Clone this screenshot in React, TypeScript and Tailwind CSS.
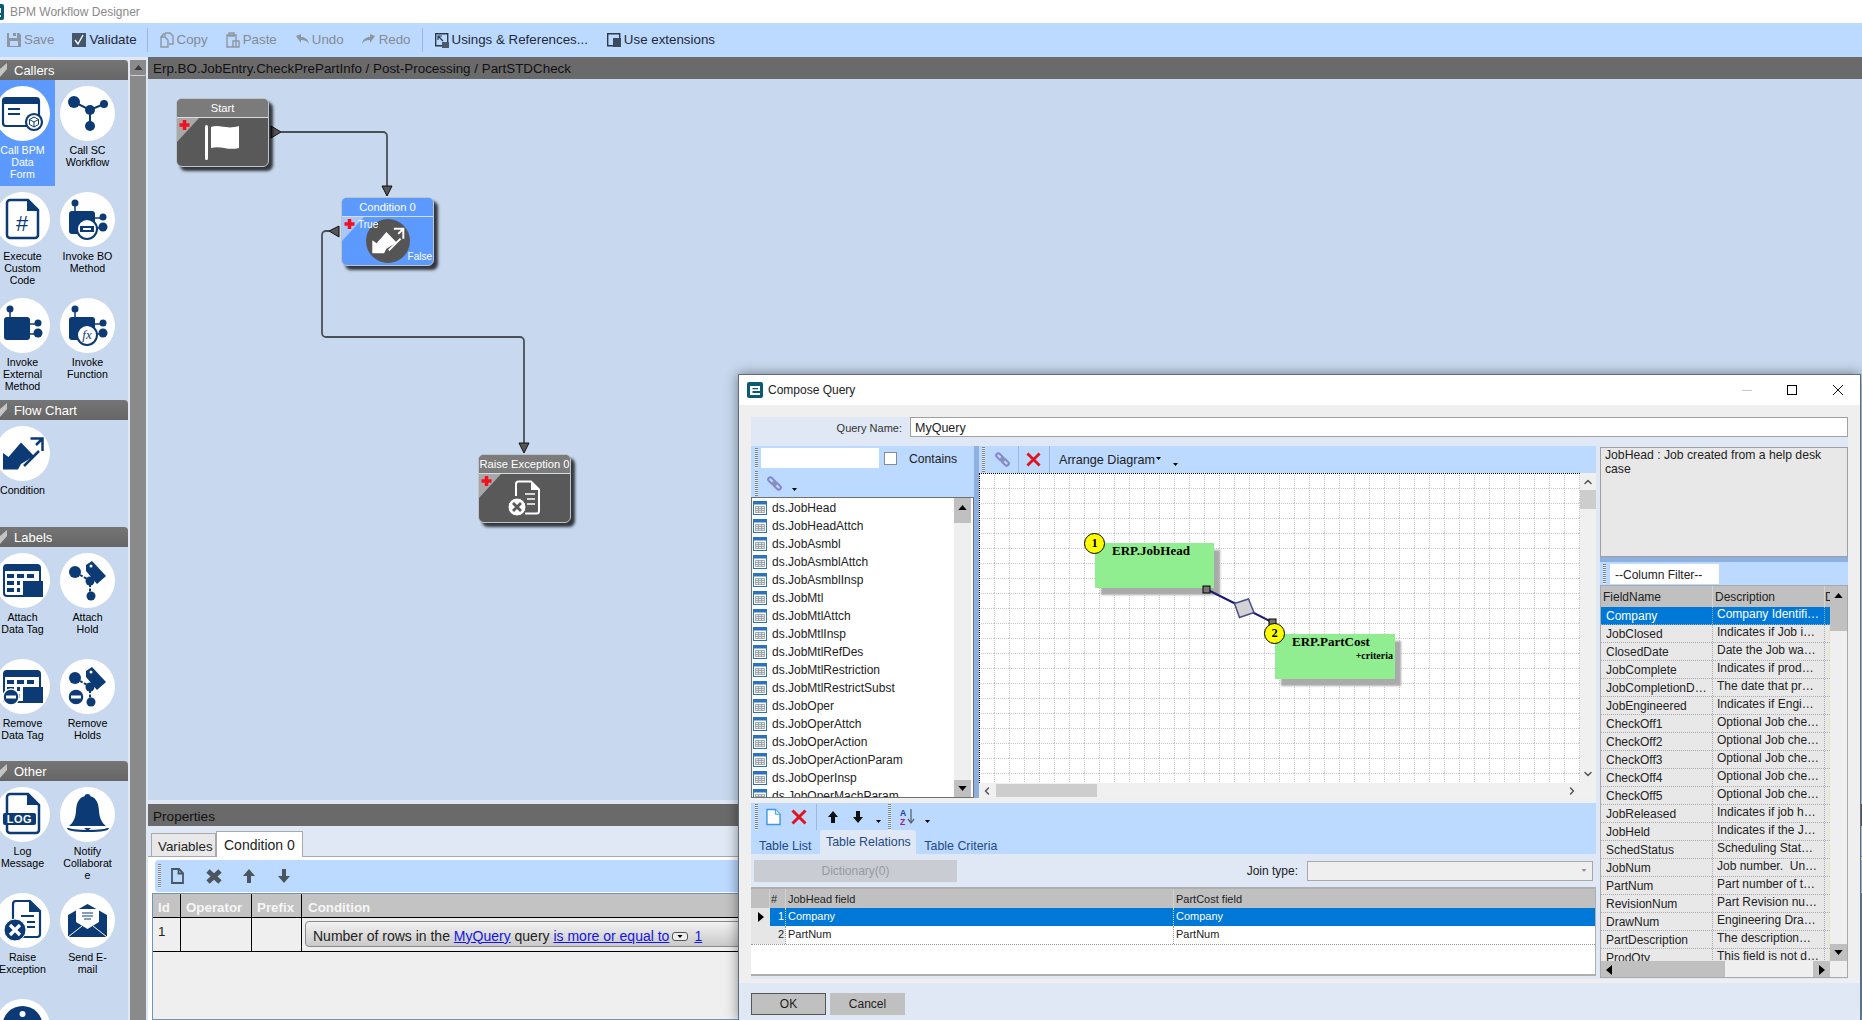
import type { ReactNode } from 'react';
import { ChevronDown, ChevronLeft, ChevronRight, ChevronUp } from 'lucide-react';

const NAVY = '#0b3a75';

// sidebar icons, all drawn on the 55x55 white circle
const BlockPins = ({ solid = true }: { solid?: boolean }) => (
  <g fill={NAVY} stroke={NAVY}>
    <circle cx="15" cy="11" r="3.5" stroke="none" />
    <path d="M15 12V20M33 26H42M33 36H42" strokeWidth="1.5" fill="none" />
    <rect x="9" y="19" width="26" height="23" rx="3" stroke="none" />
    <circle cx="43" cy="25" r="3.5" stroke="none" />
    <circle cx="43" cy="35" r="4.5" stroke="none" />
    {!solid && <circle cx="27" cy="37" r="10" fill="#fff" strokeWidth="2" />}
  </g>
);

const TableGlyph = () => (
  <g>
    <rect x="9" y="12" width="36" height="31" rx="3" fill="none" stroke={NAVY} strokeWidth="2" />
    <path d="M9 15a3 3 0 0 1 3-3h30a3 3 0 0 1 3 3v3H9z" fill={NAVY} />
    <path
      d="M12 21h7v4h-7zM22 21h7v4h-7zM32 21h7v4h-7zM12 28h7v4h-7zM22 28h3v4h-3zM12 35h7v4h-7zM22 35h3v4h-3z"
      fill={NAVY}
    />
    <rect x="28" y="28" width="20" height="16" fill={NAVY} />
  </g>
);

const HoldGlyph = () => (
  <g fill={NAVY}>
    <circle cx="15" cy="19" r="6" />
    <path d="M20 22l9 5M30 31v8" stroke={NAVY} strokeWidth="2" strokeDasharray="3 1.5" />
    <circle cx="30" cy="28" r="4.5" />
    <circle cx="31" cy="43" r="4.5" />
    <path d="M26 12l6-4 14 15-9 8-11-13z" />
    <circle cx="31" cy="13" r="1.5" fill="#fff" />
  </g>
);

const MinusBadge = () => (
  <g>
    <circle cx="16" cy="38" r="8" fill={NAVY} stroke="#fff" strokeWidth="1.5" />
    <rect x="11" y="36.5" width="10" height="3" fill="#fff" />
  </g>
);

const ConditionGlyph = ({ color = NAVY }: { color?: string }) => (
  <g>
    <path d="M8 43.500V27L13.500 31L26 16.500L39 30L26 38L23 43.500z" fill={color} />
    <path d="M35.500 12.500H47.500V25M47.500 12.500L41 19M44 25L29 40" fill="none" stroke={color} strokeWidth="2.500" />
  </g>
);

const icons: Record<string, ReactNode> = {
  form: (
    <g>
      <rect x="8" y="12" width="36" height="28" rx="3" fill="none" stroke={NAVY} strokeWidth="2.2" />
      <path d="M8 15a3 3 0 0 1 3-3h30a3 3 0 0 1 3 3v3H8z" fill={NAVY} />
      <path d="M13 23h12M13 28h12" stroke={NAVY} strokeWidth="2" />
      <circle cx="39" cy="36" r="8" fill="#fff" stroke={NAVY} strokeWidth="2.2" />
      <path d="M39 31l4.500 2.500v5L39 41l-4.500-2.500v-5zM34.500 33.500L39 36l4.500-2.500M39 36v5" fill="none" stroke={NAVY} strokeWidth="1" />
    </g>
  ),
  workflow: (
    <g fill={NAVY}>
      <path d="M14 16L30 24L44 18M30 24V40" stroke={NAVY} strokeWidth="2" fill="none" />
      <circle cx="14" cy="16" r="6" />
      <circle cx="30" cy="24" r="5" />
      <circle cx="44" cy="18" r="4" />
      <circle cx="30" cy="40" r="5" />
    </g>
  ),
  code: (
    <g>
      <path d="M15 8h18l10 10v25a3 3 0 0 1-3 3H15a3 3 0 0 1-3-3V11a3 3 0 0 1 3-3z" fill="none" stroke={NAVY} strokeWidth="2.500" />
      <path d="M32 8v11h11z" fill={NAVY} />
      <text x="27" y="39" textAnchor="middle" fontSize="22" fontFamily="Liberation Sans" fill={NAVY}>#</text>
    </g>
  ),
  bo: (
    <g>
      <BlockPins solid={false} />
      <rect x="20" y="34" width="14" height="6" fill={NAVY} />
      <rect x="23" y="36" width="8" height="2" fill="#fff" />
    </g>
  ),
  external: <BlockPins />,
  fx: (
    <g>
      <BlockPins solid={false} />
      <text x="27" y="41" textAnchor="middle" fontSize="13" fontStyle="italic" fontFamily="Liberation Serif" fill={NAVY}>fx</text>
    </g>
  ),
  condition: <ConditionGlyph />,
  attachTag: <TableGlyph />,
  attachHold: <HoldGlyph />,
  removeTag: (
    <g>
      <TableGlyph />
      <MinusBadge />
    </g>
  ),
  removeHold: (
    <g>
      <HoldGlyph />
      <MinusBadge />
    </g>
  ),
  log: (
    <g>
      <path d="M15 7h18l11 11v25a3 3 0 0 1-3 3H15a3 3 0 0 1-3-3V10a3 3 0 0 1 3-3z" fill="none" stroke={NAVY} strokeWidth="2.500" />
      <path d="M32 7v11h12z" fill={NAVY} />
      <rect x="8" y="26" width="33" height="12" rx="2" fill={NAVY} />
      <text x="24.500" y="36" textAnchor="middle" fontSize="11" fontWeight="700" fontFamily="Liberation Sans" letterSpacing="0.5" fill="#fff">LOG</text>
    </g>
  ),
  bell: (
    <g fill={NAVY}>
      <circle cx="27.500" cy="10" r="3" />
      <path d="M27.500 9c-8 0-11 6-11.500 15-.4 7-3 12-7 15h37c-4-3-6.600-8-7-15C38.500 15 35.500 9 27.500 9z" />
      <path d="M8 41c0 4 40 4 40 0" fill="none" stroke={NAVY} strokeWidth="2" />
      <path d="M24 41h7l-3.500 3z" />
    </g>
  ),
  raise: (
    <g>
      <path d="M20 8h15l10 10v23a3 3 0 0 1-3 3H22" fill="none" stroke={NAVY} strokeWidth="2.200" />
      <path d="M18 28V11a3 3 0 0 1 3-3" fill="none" stroke={NAVY} strokeWidth="2.200" />
      <path d="M34 8v11h11z" fill={NAVY} />
      <path d="M26 23h13M32 29h8M32 34h8" stroke={NAVY} strokeWidth="1.800" />
      <circle cx="20" cy="37" r="11" fill={NAVY} stroke="#fff" strokeWidth="1" />
      <path d="M15 32l10 10M25 32L15 42" stroke="#fff" strokeWidth="3.200" />
    </g>
  ),
  mail: (
    <g>
      <path d="M8 22L27.500 11 47 22v22H8z" fill={NAVY} />
      <path d="M16 16h23v13l-11.500 7L16 29z" fill="#fff" />
      <path d="M22 20h11M22 23h11M24 26h7" stroke={NAVY} strokeWidth="1.200" />
      <path d="M8 44l14-11M47 44L33 33" stroke="#fff" strokeWidth="1" />
    </g>
  ),
  info: (
    <g>
      <circle cx="27.500" cy="27" r="20" fill={NAVY} />
      <circle cx="27.500" cy="15" r="3" fill="#fff" />
      <rect x="25" y="21" width="5" height="16" fill="#fff" />
    </g>
  ),
};

const sections = [
  {
    title: 'Callers',
    gap: '',
    items: [
      { icon: 'form', label: 'Call BPM\nData\nForm', selected: true },
      { icon: 'workflow', label: 'Call SC\nWorkflow' },
      { icon: 'code', label: 'Execute\nCustom\nCode' },
      { icon: 'bo', label: 'Invoke BO\nMethod' },
      { icon: 'external', label: 'Invoke\nExternal\nMethod' },
      { icon: 'fx', label: 'Invoke\nFunction' },
    ],
  },
  { title: 'Flow Chart', gap: 'mt-[2px]', items: [{ icon: 'condition', label: 'Condition' }] },
  {
    title: 'Labels',
    gap: 'mt-px',
    items: [
      { icon: 'attachTag', label: 'Attach\nData Tag' },
      { icon: 'attachHold', label: 'Attach\nHold' },
      { icon: 'removeTag', label: 'Remove\nData Tag' },
      { icon: 'removeHold', label: 'Remove\nHolds' },
    ],
  },
  {
    title: 'Other',
    gap: 'mt-[2px]',
    items: [
      { icon: 'log', label: 'Log\nMessage' },
      { icon: 'bell', label: 'Notify\nCollaborat\ne' },
      { icon: 'raise', label: 'Raise\nException' },
      { icon: 'mail', label: 'Send E-\nmail' },
      { icon: 'info', label: '' },
    ],
  },
];

const tableNames = [
  'JobHead', 'JobHeadAttch', 'JobAsmbl', 'JobAsmblAttch', 'JobAsmblInsp', 'JobMtl', 'JobMtlAttch', 'JobMtlInsp',
  'JobMtlRefDes', 'JobMtlRestriction', 'JobMtlRestrictSubst', 'JobOper', 'JobOperAttch', 'JobOperAction',
  'JobOperActionParam', 'JobOperInsp', 'JobOperMachParam',
];

const fields = [
  ['Company', 'Company Identifi…'],
  ['JobClosed', 'Indicates if Job i…'],
  ['ClosedDate', 'Date the Job wa…'],
  ['JobComplete', 'Indicates if prod…'],
  ['JobCompletionD…', 'The date that pr…'],
  ['JobEngineered', 'Indicates if Engi…'],
  ['CheckOff1', 'Optional Job che…'],
  ['CheckOff2', 'Optional Job che…'],
  ['CheckOff3', 'Optional Job che…'],
  ['CheckOff4', 'Optional Job che…'],
  ['CheckOff5', 'Optional Job che…'],
  ['JobReleased', 'Indicates if job h…'],
  ['JobHeld', 'Indicates if the J…'],
  ['SchedStatus', 'Scheduling Stat…'],
  ['JobNum', 'Job number.  Un…'],
  ['PartNum', 'Part number of t…'],
  ['RevisionNum', 'Part Revision nu…'],
  ['DrawNum', 'Engineering Dra…'],
  ['PartDescription', 'The description…'],
  ['ProdQty', 'This field is not d…'],
];

const Tri = ({ dir, className = '' }: { dir: 'up' | 'down' | 'left' | 'right'; className?: string }) => {
  const points = { up: '0,6 5,0 10,6', down: '0,0 10,0 5,6', left: '6,0 6,10 0,5', right: '0,0 0,10 6,5' }[dir];
  const box = dir === 'up' || dir === 'down' ? '0 0 10 6' : '0 0 6 10';
  return (
    <svg viewBox={box} className={className} fill="currentColor">
      <polygon points={points} />
    </svg>
  );
};

const Grip = ({ className = '' }: { className?: string }) => (
  <div className={`w-[3px] shrink-0 bg-[repeating-linear-gradient(to_bottom,#77818e_0_1px,#e8f0fb_1px_2px)] ${className}`} />
);

const AppIcon = ({ className = '' }: { className?: string }) => (
  <svg viewBox="0 0 16 16" className={className}>
    <rect width="16" height="16" rx="2" fill="#0b5a73" />
    <path d="M3 4h10v5H5.500v2H13v2H3zM5.500 6v1.200H11V6z" fill="#fff" fillRule="evenodd" />
  </svg>
);

const LinkIcon = ({ className = '' }: { className?: string }) => (
  <svg viewBox="0 0 16 16" className={className} fill="none">
    <rect x="0.800" y="2.800" width="8.500" height="4.500" rx="2.200" transform="rotate(45 5 5)" stroke="#8388cc" strokeWidth="2.200" />
    <rect x="6.700" y="8.700" width="8.500" height="4.500" rx="2.200" transform="rotate(45 11 11)" stroke="#8388cc" strokeWidth="2.200" />
    <path d="M6 6l4 4" stroke="#8f96a0" strokeWidth="2.500" />
  </svg>
);

const RedX = ({ className = '' }: { className?: string }) => (
  <svg viewBox="0 0 16 16" className={className}>
    <path d="M1.500 1.500L14.500 14.500M14.500 1.500L1.500 14.500" stroke="#e0141e" strokeWidth="3" />
  </svg>
);

const TableIcon = () => (
  <svg viewBox="0 0 14 14" className="h-[14px] w-[14px] shrink-0">
    <rect x="0.500" y="0.500" width="13" height="13" fill="#fff" stroke="#2b73bd" />
    <rect x="0.500" y="0.500" width="13" height="3" fill="#2b73bd" />
    <path d="M2.500 5.500h9v6h-9zM2.500 7.500h9M2.500 9.500h9M5.500 5.500v6M8.500 5.500v6" fill="#e4e4e4" stroke="#909aa5" strokeWidth="0.800" />
  </svg>
);

const TinyArrow = ({ className = '' }: { className?: string }) => (
  <Tri dir="down" className={`h-[3px] w-[5px] text-black ${className}`} />
);

const ToolItem = ({ icon, label, muted }: { icon: ReactNode; label: string; muted?: boolean }) => (
  <div className={`flex items-center gap-[3px] ${muted ? 'text-[#858b93]' : 'text-[#1f2937]'}`}>
    <svg viewBox="0 0 14 16" className="h-4 w-[14px]">
      {icon}
    </svg>
    <span>{label}</span>
  </div>
);

function TopToolbar() {
  return (
    <div className="flex h-[34px] items-center bg-[#bcd9ff] pl-[7px] text-[13.33px]">
      <div className="flex gap-[18px]">
        <ToolItem muted label="Save" icon={<path d="M0 1h2v5h8V1h2l2 2v12H0zM3 9v5h8V9z M6 1h3v3H6z" fill="#8e96a1" />} />
        <ToolItem
          label="Validate"
          icon={
            <g>
              <rect y="1" width="14" height="14" fill="#46566a" />
              <path d="M3 8l3 4 5-9" fill="none" stroke="#fff" strokeWidth="1.300" />
            </g>
          }
        />
      </div>
      <div className="ml-[10px] mr-[12px] h-[24px] w-px bg-[#9fb6d4]" />
      <div className="flex gap-[18px]">
        <ToolItem muted label="Copy" icon={<path d="M5 1h5l3 3v8H9M5 1v3M1 5h4l3 3v7H1zM4 1.500L1 5" fill="none" stroke="#8e96a1" strokeWidth="1.400" />} />
        <ToolItem muted label="Paste" icon={<path d="M1 3h9v12H1zM3 1h5v3H3zM7 9h6v6H7z" fill="#bcd9ff" stroke="#8e96a1" strokeWidth="1.400" />} />
        <ToolItem muted label="Undo" icon={<path d="M1 4l5-2v3c4 0 7 2 8 7-2-3-4-4-8-4v3z" fill="#8e96a1" />} />
        <ToolItem muted label="Redo" icon={<path d="M13 4L8 2v3c-4 0-7 2-8 7 2-3 4-4 8-4v3z" fill="#8e96a1" />} />
      </div>
      <div className="ml-[11px] mr-[12px] h-[24px] w-px bg-[#9fb6d4]" />
      <div className="flex gap-[19px]">
        <ToolItem
          label="Usings & References..."
          icon={
            <g>
              <path d="M.7 1.700h12v12h-12z" fill="none" stroke="#2c3a48" strokeWidth="1.400" />
              <path d="M7 10h7v6H7z" fill="#4a5a6a" />
              <path d="M3 4l5 5M3 8V4h4" fill="none" stroke="#2c3a48" strokeWidth="1.200" />
            </g>
          }
        />
        <ToolItem
          label="Use extensions"
          icon={
            <g>
              <path d="M.7 1.700h12v12h-12z" fill="none" stroke="#2c3a48" strokeWidth="1.400" />
              <path d="M6 6h8v9H6z" fill="#3a4a5a" />
            </g>
          }
        />
      </div>
    </div>
  );
}

function Sidebar() {
  return (
    <div className="flex w-[148px] shrink-0 bg-[#dfe8f4] pt-[3px]">
      <div className="w-[128px] overflow-hidden bg-[#c8d9ef]">
        {sections.map((section) => (
          <div key={section.title} className={section.gap}>
            <div className="flex h-[20px] items-center rounded-tr-[4px] bg-[linear-gradient(#757575,#666)] pl-[14px] pt-[2px] text-[13px] text-white">
              <svg viewBox="0 0 8 14" className="absolute left-0 -mt-[2px] h-[14px] w-[8px]">
                <path d="M0 14V6L7 0v6z" fill="#c4c4c4" />
              </svg>
              {section.title}
            </div>
            <div className="-ml-[10px] grid w-[130px] grid-cols-[65px_65px]">
              {section.items.map((item) => (
                <div
                  key={item.icon}
                  className={`flex h-[106px] flex-col items-center pt-[6px] ${item.selected ? 'bg-[#5c9aff] text-white' : 'text-black'}`}
                >
                  <svg viewBox="0 0 55 55" className="h-[55px] w-[55px] shrink-0">
                    <circle cx="27.500" cy="27.500" r="27.500" fill="#fff" />
                    {icons[item.icon]}
                  </svg>
                  <div className="mt-[3px] whitespace-pre-line text-center text-[10.67px] leading-[12px]">{item.label}</div>
                </div>
              ))}
            </div>
          </div>
        ))}
      </div>
      <div className="ml-[2px] flex w-[16px] flex-col bg-[#8a8a8a]">
        <div className="flex h-[16px] items-center justify-center rounded-[2px] border-b border-[#ccd2da]">
          <Tri dir="up" className="h-[5px] w-[9px] text-[#3a3a3a]" />
        </div>
      </div>
    </div>
  );
}

const CornerPlus = ({ fill }: { fill: string }) => (
  <svg viewBox="0 0 22 24" className="absolute left-0 top-0 h-[24px] w-[22px]">
    <polygon points="0,0 22,0 0,24" fill={fill} />
    <path d="M7.500 2v10M2.500 7h10" stroke="#f01020" strokeWidth="3.500" />
  </svg>
);

const FlowNode = ({
  title,
  className,
  body,
  header,
  corner,
  children,
}: {
  title: string;
  className: string;
  body: string;
  header: string;
  corner: string;
  children: ReactNode;
}) => (
  <div className={`absolute flex h-[69px] w-[93px] flex-col rounded-[6px] border border-[#bfc4ca] shadow-[4px_4px_3px_rgba(0,0,0,0.75)] ${body} ${className}`}>
    <div className={`h-[19px] shrink-0 rounded-t-[5px] border-b border-[#d8dde3] text-center text-[11.2px] leading-[18px] text-white ${header}`}>{title}</div>
    <div className="relative flex-1">
      <CornerPlus fill={corner} />
      {children}
    </div>
  </div>
);

function Canvas() {
  return (
    <div className="relative h-[721px] bg-[#c8d9ef]">
      <svg viewBox="148 79 1714 721" className="absolute inset-0 h-[721px] w-[1714px]" fill="none">
        <path d="M281 132H383a4 4 0 0 1 4 4V187" stroke="#4a5058" strokeWidth="1.800" />
        <path d="M329 231H326a4 4 0 0 0-4 4V333a4 4 0 0 0 4 4H520a4 4 0 0 1 4 4V444" stroke="#4a5058" strokeWidth="1.800" />
        <polygon points="271,126 271,138 281,132" fill="#555" stroke="#111" />
        <polygon points="382,186 392,186 387,196" fill="#555" stroke="#111" />
        <polygon points="339,226 339,237 329,231" fill="#555" stroke="#111" />
        <polygon points="519,443 529,443 524,453" fill="#555" stroke="#111" />
      </svg>
      <FlowNode title="Start" className="left-[28px] top-[19px]" body="bg-[#595959]" header="bg-[#7b7b7b]" corner="#a8a8a8">
        <svg viewBox="0 0 91 49" className="absolute inset-0">
          <rect x="28" y="7" width="3" height="35" rx="1.500" fill="#fff" />
          <path d="M34 9c9-3 15 3 28-1v22c-12 3-18-3-28 0z" fill="#fff" />
        </svg>
      </FlowNode>
      <FlowNode title="Condition 0" className="left-[193px] top-[118px]" body="bg-[#5c9aff]" header="bg-[#5c9aff]" corner="#a9c7f7">
        <div className="absolute left-[24px] top-[2px] h-[44px] w-[44px] rounded-full bg-[#555]">
          <svg viewBox="0 0 56 56" className="h-[44px] w-[44px]">
            <ConditionGlyph color="#fff" />
          </svg>
        </div>
        <span className="absolute left-[16px] top-[2px] text-[10px] leading-[12px] text-white">True</span>
        <span className="absolute bottom-[2px] right-[1px] text-[10px] leading-[12px] text-white">False</span>
      </FlowNode>
      <FlowNode title="Raise Exception 0" className="left-[330px] top-[375px]" body="bg-[#595959]" header="bg-[#7b7b7b]" corner="#a8a8a8">
        <svg viewBox="0 0 91 49" className="absolute inset-0">
          <path d="M37 22V10a2.500 2.500 0 0 1 2.500-2.500H52l8 8V37a2.500 2.500 0 0 1-2.500 2.500H46" fill="none" stroke="#fff" strokeWidth="2" />
          <path d="M52 8v8h8z" fill="#fff" />
          <path d="M46 20h10M48 25h8M48 30h8" stroke="#fff" strokeWidth="1.500" />
          <circle cx="38" cy="33" r="9" fill="#fff" stroke="#595959" />
          <path d="M34 29l8 8M42 29l-8 8" stroke="#595959" strokeWidth="2.800" />
        </svg>
      </FlowNode>
    </div>
  );
}

function PropertiesPanel() {
  return (
    <div className="flex flex-1 flex-col overflow-hidden">
      <div className="h-[22px] shrink-0 bg-[#6a6a6a] pl-[5px] text-[13.6px] leading-[25px] text-[#111]">Properties</div>
      <div className="flex h-[31px] shrink-0 items-end border-b border-[#a9a9a9] bg-[#dfe8f4] pl-[3px] text-[#222]">
        <div className="h-[23px] w-[65px] border border-b-0 border-[#a9a9a9] bg-[#e8e8e8] pl-[6px] text-[13.33px] leading-[25px]">Variables</div>
        <div className="-mb-px h-[26px] w-[87px] border border-b-0 border-[#a9a9a9] bg-white pl-[7px] text-[14px] leading-[27px]">Condition 0</div>
      </div>
      <div className="flex flex-1 flex-col bg-white pl-[4px]">
        <div className="ml-[3px] mt-[3px] flex h-[32px] items-center rounded-l-[4px] bg-[#bcd9ff] pl-[3px]">
          <Grip className="h-[24px]" />
          <svg viewBox="0 0 135 16" className="ml-[10px] h-4 w-[135px]" fill="#4a5560">
            <path d="M1 1h7l4 4v10H1z M7.500 1v4.500H12" fill="none" stroke="#4a5560" strokeWidth="1.800" />
            <path d="M37 3L49 14M49 3L37 14" stroke="#4a5560" strokeWidth="4.800" fill="none" />
            <path d="M78 1l6 7h-4v7h-4V8h-4zM113 15l6-7h-4V1h-4v7h-4z" />
          </svg>
        </div>
        <div className="mt-px flex-1 border border-[#6f93bd] bg-[#efefef]">
          <div className="flex h-[24px] border-b border-black bg-[#c3c3c3] text-[13.33px] font-bold leading-[27px] text-[#f6f6f6]">
            <div className="w-[28px] border-r border-black pl-[5px]">Id</div>
            <div className="w-[71px] border-r border-black pl-[5px]">Operator</div>
            <div className="w-[50px] border-r border-black pl-[5px]">Prefix</div>
            <div className="pl-[6px]">Condition</div>
          </div>
          <div className="flex h-[34px] border-b border-black text-[13.33px] text-[#222]">
            <div className="w-[28px] border-r border-black pl-[5px] pt-[4px]">1</div>
            <div className="w-[71px] border-r border-black" />
            <div className="w-[50px] border-r border-black" />
            <div className="ml-[3px] mt-[3px] flex h-[26px] w-[600px] items-center rounded-l-[4px] border border-[#8a8a8a] bg-[linear-gradient(#f2f2f2,#c9c9c9)] pl-[7px] pt-[4px] text-[14px] text-[#222]">
              <span>Number of rows in the&nbsp;</span>
              <span className="text-[#1414e6] underline">MyQuery</span>
              <span>&nbsp;query&nbsp;</span>
              <span className="text-[#1414e6] underline">is more or equal to</span>
              <span className="ml-[3px] mt-px flex h-[9px] w-[16px] items-center justify-center rounded-[3px] border border-[#555] bg-[#eee]">
                <Tri dir="down" className="h-[3px] w-[6px] text-black" />
              </span>
              <span className="ml-[6px] text-[#1414e6] underline">1</span>
            </div>
          </div>
        </div>
      </div>
    </div>
  );
}

const VScroll = ({ top, bottom, thumb }: { top: string; bottom: string; thumb?: string }) => (
  <div className="flex w-[17px] shrink-0 flex-col justify-between bg-[#efefef]">
    <div className={`flex justify-center bg-[#c0c0c0] pt-[7px] ${top}`}>
      <Tri dir="up" className="h-[5px] w-[9px] text-black" />
    </div>
    {thumb}
    <div className={`flex items-center justify-center bg-[#c0c0c0] ${bottom}`}>
      <Tri dir="down" className="h-[5px] w-[9px] text-black" />
    </div>
  </div>
);

function TablePicker() {
  return (
    <div className="flex w-[223px] shrink-0 flex-col">
      <div className="h-[51px] shrink-0 bg-[#bcd9ff]">
        <div className="flex h-[24px] items-center pl-[4px]">
          <Grip className="h-[20px]" />
          <div className="ml-[3px] h-[20px] w-[118px] bg-white" />
          <div className="ml-[5px] h-[13px] w-[13px] border border-[#8a8a8a] bg-white" />
          <span className="ml-[12px] pt-[2px] text-[12.2px] text-[#222]">Contains</span>
        </div>
        <div className="flex h-[27px] items-center pl-[4px]">
          <Grip className="h-[25px]" />
          <LinkIcon className="ml-[9px] h-[15px] w-[15px]" />
          <TinyArrow className="ml-[10px] mt-[11px]" />
        </div>
      </div>
      <div className="flex h-[301px] border border-[#707070] bg-white">
        <div className="flex-1 overflow-hidden pt-px">
          {tableNames.map((name) => (
            <div key={name} className="flex h-[18px] items-center gap-[5px] pl-[1px] text-[12px] text-[#222]">
              <TableIcon />
              <span>ds.{name}</span>
            </div>
          ))}
        </div>
        <VScroll top="h-[25px]" bottom="h-[17px]" />
        <div className="w-[2px]" />
      </div>
    </div>
  );
}

function DiagramPane() {
  return (
    <div className="flex flex-1 flex-col">
      <div className="flex h-[27px] shrink-0 items-center bg-[#bcd9ff] pl-[3px]">
        <Grip className="h-[25px]" />
        <LinkIcon className="ml-[10px] h-[15px] w-[15px]" />
        <div className="ml-[8px] h-[27px] w-px bg-[#9fb6d4]" />
        <RedX className="ml-[7px] h-[15px] w-[15px]" />
        <div className="ml-[8px] h-[27px] w-px bg-[#9fb6d4]" />
        <span className="ml-[9px] pt-[2px] text-[12.6px] text-[#222]">Arrange Diagram</span>
        <TinyArrow className="ml-[1px] mb-[3px]" />
        <TinyArrow className="ml-[12px] mt-[9px]" />
      </div>
      <div className="flex h-[310px]">
        <div className="relative flex-1 overflow-hidden border-l border-t border-dotted border-black bg-white">
          <svg className="absolute inset-0 h-full w-full">
            <defs>
              <pattern id="diagram-grid" x="14" y="14" width="15" height="15" patternUnits="userSpaceOnUse">
                <path d="M0 .5H15M.5 0V15" stroke="#c8c8c8" strokeWidth="1" strokeDasharray="1 1" fill="none" />
              </pattern>
            </defs>
            <rect width="100%" height="100%" fill="url(#diagram-grid)" />
          </svg>

          <div className="absolute left-[115px] top-[69px] h-[45px] w-[119px] bg-[#90ee90] pl-[17px] pt-[1px] font-['Liberation_Serif',serif] text-[13px] font-bold leading-[14px] text-black shadow-[6px_7px_2px_#aaa]">
            ERP.JobHead
          </div>
          <div className="absolute left-[295px] top-[160px] h-[45px] w-[120px] bg-[#90ee90] pl-[17px] pt-[1px] font-['Liberation_Serif',serif] text-[13px] font-bold leading-[14px] text-black shadow-[6px_7px_2px_#aaa]">
            ERP.PartCost
            <div className="mt-[1px] pr-[2px] text-right text-[10px] leading-[12px]">+criteria</div>
          </div>
          <svg viewBox="0 0 600 310" className="absolute left-0 top-0 h-[310px] w-[600px]">
            <path d="M226 115L264 134L292 148" stroke="#1b1b72" strokeWidth="2" fill="none" />
            <polygon points="268.500,125 274,138.500 259.500,143.500 254.500,129.500" fill="#d3d3d3" stroke="#4a4f8a" strokeWidth="1.500" />
            <rect x="223" y="112" width="7" height="7" fill="#777" stroke="#000" />
            <rect x="289" y="145" width="7" height="7" fill="#777" stroke="#000" />
          </svg>
          <div className="absolute left-[104px] top-[59px] flex h-[21px] w-[21px] items-center justify-center rounded-full border border-black bg-[#ffff00] font-['Liberation_Serif',serif] text-[12.5px] font-bold">
            1
          </div>
          <div className="absolute left-[284px] top-[149px] flex h-[21px] w-[21px] items-center justify-center rounded-full border border-black bg-[#ffff00] font-['Liberation_Serif',serif] text-[12.5px] font-bold">
            2
          </div>
        </div>
        <div className="flex w-[16px] shrink-0 flex-col items-center justify-between bg-[#f0f0f0] py-[3px]">
          <div className="w-full">
            <ChevronUp size={12} strokeWidth={3} className="mx-auto text-[#555]" />
            <div className="mt-[2px] h-[19px] w-full bg-[#cdcdcd]" />
          </div>
          <ChevronDown size={12} strokeWidth={3} className="text-[#555]" />
        </div>
      </div>
      <div className="flex h-[15px] items-center justify-between bg-[#f0f0f0] pl-[2px] pr-[18px]">
        <div className="flex items-center">
          <ChevronLeft size={12} strokeWidth={3} className="text-[#555]" />
          <div className="ml-[3px] h-[13px] w-[101px] bg-[#cdcdcd]" />
        </div>
        <ChevronRight size={12} strokeWidth={3} className="text-[#555]" />
      </div>
    </div>
  );
}

function RelationsPane() {
  return (
    <div>
      <div className="h-[51px] bg-[#bcd9ff]">
        <div className="flex h-[27px] items-center pl-[4px]">
          <Grip className="h-[26px]" />
          <svg viewBox="0 0 16 18" className="ml-[8px] h-[18px] w-[15px]">
            <path d="M1 1h9l5 5v11H1z" fill="#fff" stroke="#3b97e6" strokeWidth="1.500" />
            <path d="M10 1v5h5" fill="#d6ecff" stroke="#3b97e6" />
          </svg>
          <RedX className="ml-[10px] h-[16px] w-[16px]" />
          <div className="ml-[9px] h-[26px] w-px bg-[#9fb6d4]" />
          <svg viewBox="0 0 35 12" className="ml-[11px] h-[12px] w-[35px]" fill="#111">
            <path d="M5 0l5 6H7v6H3V6H0zM30 12l-5-6h3V0h4v6h3z" />
          </svg>
          <TinyArrow className="ml-[13px] mt-[10px]" />
          <Grip className="ml-[7px] h-[26px]" />
          <svg viewBox="0 0 16 18" className="ml-[9px] h-[18px] w-[16px]">
            <text x="0" y="8" fontSize="8.500" fontWeight="700" fontFamily="Liberation Sans" fill="#1a3fa8">A</text>
            <text x="0" y="17" fontSize="8.500" fontWeight="700" fontFamily="Liberation Sans" fill="#a01a8a">Z</text>
            <path d="M11 1v13M8 11l3 4 3-4" fill="none" stroke="#5a6470" strokeWidth="1.300" />
          </svg>
          <TinyArrow className="ml-[9px] mt-[10px]" />
        </div>
        <div className="flex h-[24px] items-start pl-[8px] text-[12.4px] text-[#1f4a86]">
          <div className="pt-[7px]">Table List</div>
          <div className="ml-[9px] h-[24px] w-[96px] rounded-t-[3px] bg-[#dfe8f4] pt-[3px] text-center">Table Relations</div>
          <div className="ml-[8px] pt-[7px]">Table Criteria</div>
        </div>
      </div>
      <div className="flex h-[33px] items-center pl-[3px] pr-[3px]">
        <div className="h-[22px] w-[203px] bg-[#c9ccd2] text-center text-[12px] leading-[22px] text-[#979ba1]">Dictionary(0)</div>
        <div className="ml-auto mr-[9px] text-[12px] text-[#222]">Join type:</div>
        <div className="flex h-[20px] w-[286px] items-center justify-end border border-[#a9a9a9] bg-[#efefef] pr-[5px]">
          <Tri dir="down" className="h-[3px] w-[6px] text-[#a782a2]" />
        </div>
      </div>
      <div className="h-[89px] border-y-2 border-r border-[#aeaeae] bg-white text-[11px]">
        <div className="flex h-[19px] bg-[#c0c0c0] leading-[20px] text-[#222]">
          <div className="w-[19px] border-r border-[#d0d0d0]" />
          <div className="w-[15px] pl-[1px]">#</div>
          <div className="w-[388px] border-l border-[#d0d0d0] pl-[2px]">JobHead field</div>
          <div className="border-l border-[#d0d0d0] pl-[2px]">PartCost field</div>
        </div>
        <div className="flex h-[18px] leading-[16px] text-white">
          <div className="flex w-[19px] items-center justify-center bg-[#e6e6e6]">
            <Tri dir="right" className="h-[10px] w-[6px] text-black" />
          </div>
          <div className="flex flex-1 bg-[#0078d7]">
            <div className="w-[15px] pr-[1px] text-right">1</div>
            <div className="w-[388px] border-l border-dotted border-[#cfe4f7] pl-[2px]">Company</div>
            <div className="border-l border-dotted border-[#cfe4f7] pl-[2px]">Company</div>
          </div>
        </div>
        <div className="flex h-[19px] border-b border-dotted border-[#999] leading-[17px] text-[#222]">
          <div className="w-[19px] bg-[#e6e6e6]" />
          <div className="w-[15px] bg-[#e6e6e6] pr-[1px] text-right">2</div>
          <div className="w-[388px] border-l border-dotted border-[#999] pl-[2px]">PartNum</div>
          <div className="border-l border-dotted border-[#999] pl-[2px]">PartNum</div>
        </div>
      </div>
    </div>
  );
}

function FieldPane() {
  return (
    <div className="ml-[4px] flex w-[248px] shrink-0 flex-col">
      <div className="mt-px h-[110px] shrink-0 border border-[#a0a0a0] bg-[#e8e8e8] px-[4px] text-[12.2px] leading-[14px] text-[#222]">
        JobHead : Job created from a help desk case
      </div>
      <div className="h-[5px] shrink-0 bg-[#8db0e0]" />
      <div className="flex h-[23px] shrink-0 items-center bg-[#bcd9ff] pl-[3px]">
        <Grip className="h-[20px]" />
        <div className="ml-[4px] h-[20px] w-[109px] bg-white pl-[5px] text-[12px] leading-[23px] text-[#222]">--Column Filter--</div>
      </div>
      <div className="flex h-[393px] flex-col overflow-hidden border-x border-b border-t border-[#a9a9a9] bg-[#e8e8e8]">
        <div className="flex h-[375px]">
          <div className="flex-1 overflow-hidden">
            <div className="flex h-[21px] bg-[#c0c0c0] text-[12px] leading-[23px] text-[#222]">
              <div className="w-[112px] border-r border-[#d4d4d4] pl-[2px]">FieldName</div>
              <div className="w-[112px] border-r border-[#d4d4d4] pl-[2px]">Description</div>
              <div className="w-[5px] overflow-hidden">D</div>
            </div>
            {fields.map(([name, desc], i) => (
              <div
                key={name}
                className={`flex h-[18px] border-b border-dotted border-[#aaa] text-[12px] ${i === 0 ? 'bg-[#0078d7] text-white' : 'text-[#222]'}`}
              >
                <div className="w-[112px] border-r border-dotted border-[#aaa] pl-[5px] leading-[18px]">{name}</div>
                <div className="w-[112px] whitespace-pre border-r border-dotted border-[#aaa] pl-[4px] leading-[15px]">{desc}</div>
                <div className="w-[5px] overflow-hidden pl-[4px] leading-[16px] text-[#e8b860]">|</div>
              </div>
            ))}
          </div>
          <VScroll top="h-[45px]" bottom="h-[17px]" />
        </div>
        <div className="flex h-[17px] shrink-0 bg-[#efefef]">
          <div className="flex w-[124px] items-center bg-[#c0c0c0] pl-[5px]">
            <Tri dir="left" className="h-[10px] w-[6px] text-black" />
          </div>
          <div className="ml-auto mr-[17px] flex w-[17px] items-center justify-center bg-[#c0c0c0]">
            <Tri dir="right" className="h-[10px] w-[6px] text-black" />
          </div>
        </div>
      </div>
    </div>
  );
}

function ComposeQueryDialog() {
  return (
    <div className="absolute left-[738px] top-[374px] flex h-[646px] w-[1123px] flex-col border-x border-t border-[#5b6d7e] bg-[#efefef] shadow-[0_0_12px_rgba(0,0,0,0.45)]">
      <div className="flex h-[30px] shrink-0 items-center bg-white pl-[8px] text-[12px] text-[#222]">
        <AppIcon className="h-4 w-4" />
        <span className="ml-[5px]">Compose Query</span>
        <div className="ml-auto flex items-center">
          <div className="h-px w-[10px] bg-[#c8c8c8]" />
          <div className="ml-[35px] h-[10px] w-[10px] border border-black" />
          <svg viewBox="0 0 10 10" className="ml-[36px] mr-[17px] h-[10px] w-[10px]">
            <path d="M0 0L10 10M10 0L0 10" stroke="#111" strokeWidth="1" />
          </svg>
        </div>
      </div>
      <div className="ml-[12px] mt-[12px] w-[1097px] bg-[#dfe8f4]">
        <div className="flex h-[29px] items-start">
          <div className="w-[159px] pr-[8px] pt-[4px] text-right text-[11px] font-medium leading-[14px] text-[#333]">Query Name:</div>
          <div className="h-[20px] flex-1 border border-[#a0a0a0] bg-white pl-[4px] text-[12.5px] leading-[20px] text-[#222]">MyQuery</div>
        </div>
        <div className="flex h-[533px]">
          <div className="w-[845px] shrink-0">
            <div className="flex h-[352px]">
              <TablePicker />
              <div className="w-[5px] shrink-0 bg-[#8db0e0]" />
              <DiagramPane />
            </div>
            <div className="h-[5px] bg-[#efefef]" />
            <RelationsPane />
          </div>
          <FieldPane />
        </div>
      </div>
      <div className="mt-[4px] flex-1 bg-[#dfe8f4] pl-[12px] pt-[10px] text-[12px] text-[#222]">
        <div className="flex gap-[4px]">
          <div className="h-[22px] w-[75px] border border-[#555] bg-[#c0c0c0] text-center leading-[21px]">OK</div>
          <div className="h-[22px] w-[75px] bg-[#c0c0c0] text-center leading-[22px]">Cancel</div>
        </div>
      </div>
    </div>
  );
}

export default function App() {
  return (
    <div className="relative flex h-[1020px] w-[1862px] flex-col overflow-hidden bg-white font-['Liberation_Sans',Arial,sans-serif]">
      <div className="flex h-[23px] shrink-0 items-center bg-white text-[12px] text-[#8a8a8a]">
        <AppIcon className="-ml-[12px] h-4 w-4" />
        <span className="ml-[6px]">BPM Workflow Designer</span>
      </div>
      <TopToolbar />
      <div className="flex flex-1 overflow-hidden">
        <Sidebar />
        <div className="flex flex-1 flex-col overflow-hidden">
          <div className="h-[22px] shrink-0 bg-[#6a6a6a] pl-[5px] text-[13.4px] leading-[24px] text-[#111]">
            Erp.BO.JobEntry.CheckPrePartInfo / Post-Processing / PartSTDCheck
          </div>
          <Canvas />
          <div className="h-[4px] shrink-0 bg-[#dfe8f4]" />
          <PropertiesPanel />
        </div>
      </div>
      <ComposeQueryDialog />
    </div>
  );
}
